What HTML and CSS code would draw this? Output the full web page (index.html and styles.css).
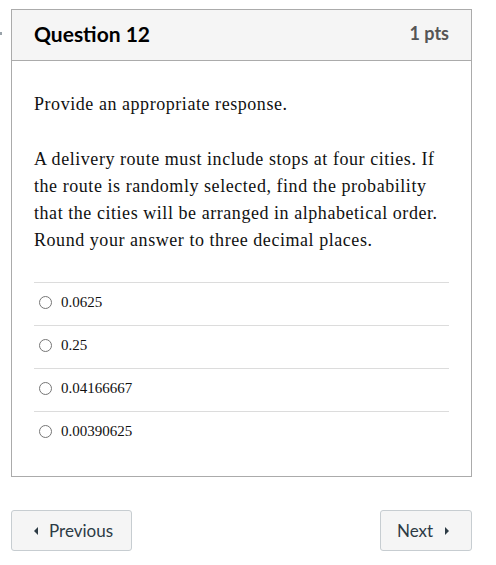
FILE: index.html
```html
<!DOCTYPE html>
<html>
<head>
<meta charset="utf-8">
<link rel="stylesheet" href="styles.css">
</head>
<body>
<div class="page">
  <span class="edge-dot"></span>
  <div class="card">
    <div class="card-header">
      <span class="title">Question 12</span>
      <span class="pts">1 pts</span>
    </div>
    <div class="card-body">
      <p class="q-text first">Provide an appropriate response.</p>
      <p class="q-text">A delivery route must include stops at four cities. If the route is randomly selected, find the probability that the cities will be arranged in alphabetical order. Round your answer to three decimal places.</p>
      <div class="answers">
        <label class="answer"><span class="radio"></span><span class="a-text">0.0625</span></label>
        <label class="answer"><span class="radio"></span><span class="a-text">0.25</span></label>
        <label class="answer"><span class="radio"></span><span class="a-text">0.04166667</span></label>
        <label class="answer"><span class="radio"></span><span class="a-text">0.00390625</span></label>
      </div>
    </div>
  </div>
  <div class="nav">
    <button class="btn prev"><span class="tri tri-left"></span>Previous</button>
    <button class="btn next">Next<span class="tri tri-right"></span></button>
  </div>
</div>
</body>
</html>
```
FILE: styles.css
```css
html, body {
  margin: 0;
  padding: 0;
  background: #fff;
}
.page {
  position: relative;
  padding: 9px 24px 0 11px;
  width: 461px;
}
.edge-dot {
  position: absolute;
  left: 0;
  top: 32px;
  width: 2px;
  height: 3px;
  background: #9aa3aa;
}
.card {
  border: 1px solid #ababab;
  width: 459px;
}
.card-header {
  display: flex;
  justify-content: space-between;
  align-items: center;
  height: 46px;
  padding: 0 22px 4px;
  background: #f5f5f5;
  border-bottom: 1px solid #ababab;
  font-family: Lato, sans-serif;
}
.title {
  font-weight: bold;
  font-size: 21px;
  color: #000;
}
.pts {
  font-weight: bold;
  font-size: 18px;
  color: #555;
}
.card-body {
  padding: 30px 22px 22px;
}
.q-text {
  margin: 0 0 28px;
  font-family: "Liberation Serif", serif;
  font-size: 18px;
  letter-spacing: 0.55px;
  line-height: 27px;
  color: #111;
}
.answers {
  border-top: 1px solid #dcdcdc;
}
.answer {
  display: flex;
  align-items: center;
  height: 39px;
  padding-bottom: 3px;
  border-bottom: 1px solid #dcdcdc;
  padding-left: 5px;
  font-family: "Liberation Serif", serif;
  font-size: 15px;
  color: #111;
}
.answer:last-child {
  border-bottom: none;
}
.radio {
  width: 11px;
  height: 11px;
  border: 1px solid #767676;
  border-radius: 50%;
  margin-right: 9px;
}
.nav {
  display: flex;
  justify-content: space-between;
  margin-top: 33px;
}
.btn {
  display: flex;
  align-items: center;
  height: 41px;
  background: #f5f5f5;
  border: 1px solid #c7cdd1;
  border-radius: 3px;
  font-family: Lato, sans-serif;
  font-size: 17px;
  color: #2d3b45;
  padding: 0 14px;
}
.prev {
  width: 121px;
  padding-left: 22px;
}
.next {
  width: 92px;
  padding-left: 16px;
}
.tri {
  width: 0;
  height: 0;
  border-top: 4px solid transparent;
  border-bottom: 4px solid transparent;
}
.tri-left {
  border-right: 4px solid #2d3b45;
  margin-right: 11px;
}
.tri-right {
  border-left: 4px solid #2d3b45;
  margin-left: 12px;
}
```
